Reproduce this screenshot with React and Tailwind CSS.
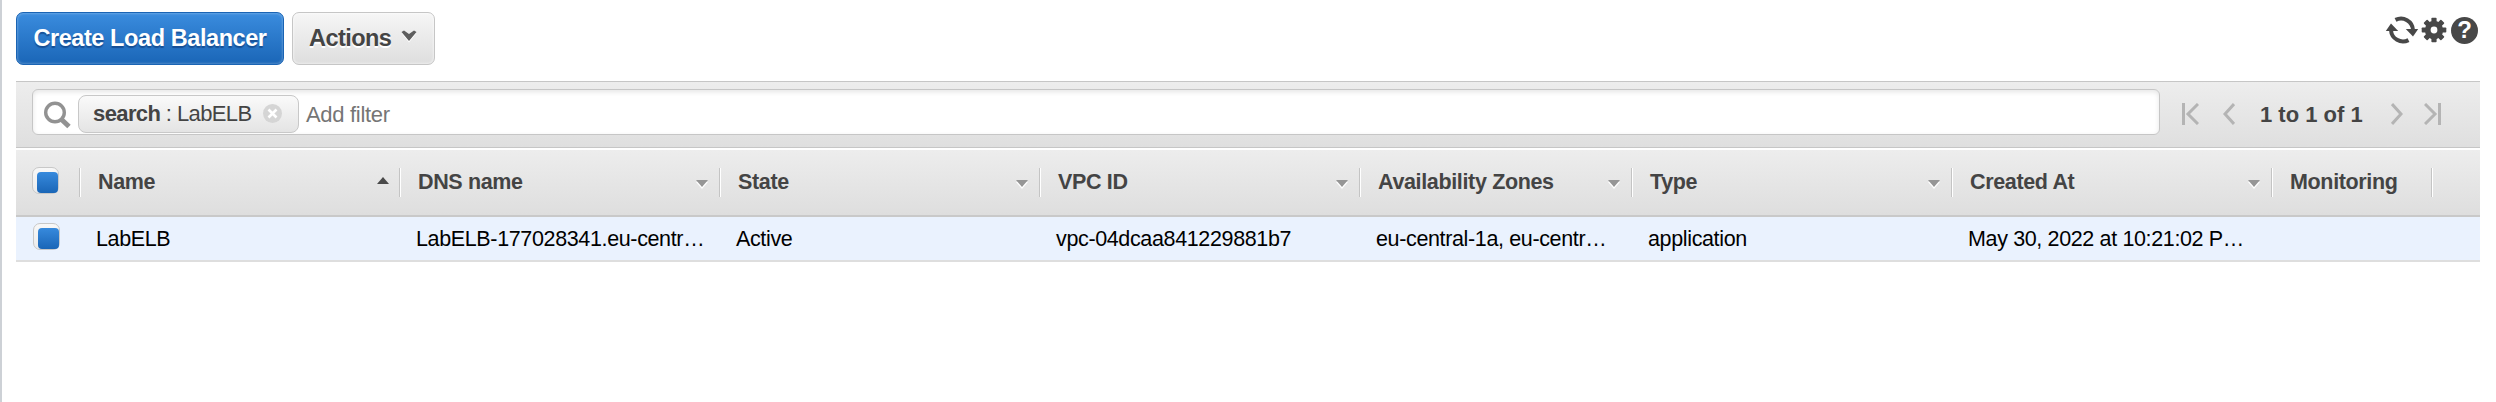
const columns = [
  { label: "Name", value: "LabELB", width: "w-[320px]", sort: "asc" },
  { label: "DNS name", value: "LabELB-177028341.eu-centr…", width: "w-[320px]", sort: "none" },
  { label: "State", value: "Active", width: "w-[320px]", sort: "none" },
  { label: "VPC ID", value: "vpc-04dcaa841229881b7", width: "w-[320px]", sort: "none" },
  { label: "Availability Zones", value: "eu-central-1a, eu-centr…", width: "w-[272px]", sort: "none" },
  { label: "Type", value: "application", width: "w-[320px]", sort: "none" },
  { label: "Created At", value: "May 30, 2022 at 10:21:02 P…", width: "w-[320px]", sort: "none" },
  { label: "Monitoring", value: "", width: "w-[160px]", sort: null },
];

function Separator() {
  return <span className="h-[29px] w-[2px] shrink-0 border-l border-r border-l-[#c4c4c4] border-r-white" />;
}

function SortMark({ sort }) {
  if (sort === "asc") {
    return (
      <svg width="12" height="7" viewBox="0 0 12 7" className="mr-[10px] mb-[4px]">
        <path d="M0 7L6 0L12 7Z" fill="#4a4a4a" />
      </svg>
    );
  }
  return (
    <svg width="12" height="9" viewBox="0 0 12 9" className="mr-[11px] mt-[3px]">
      <path d="M0 2L6 9L12 2Z" fill="#fff" />
      <path d="M0 0L6 7L12 0Z" fill="#969696" />
    </svg>
  );
}

function Checkbox() {
  return (
    <span className="flex h-[27px] w-[27px] items-end justify-end rounded-[7px] border border-[#c8c8c8] bg-gradient-to-b from-[#f8f8f8] to-[#ebebeb]">
      <span className="h-[21px] w-[21px] rounded-[4px] bg-gradient-to-b from-[#378add] to-[#1a66b7]" />
    </span>
  );
}

function PagerIcon({ d, bar, width, className }) {
  return (
    <svg width={width} height="22" viewBox={`0 0 ${width} 22`} fill="none" stroke="#b4b4b4" strokeWidth="3" className={className}>
      <path d={d} />
      {bar !== undefined && <path d={`M${bar} 0V22`} />}
    </svg>
  );
}

function GearIcon() {
  return (
    <svg width="26" height="26" viewBox="-13 -13 26 26" fill="#484848">
      {[0, 45, 90, 135].map((a) => (
        <rect key={a} x="-2.6" y="-12.3" width="5.2" height="24.6" rx="0.8" transform={`rotate(${a})`} />
      ))}
      <circle r="9.2" />
      <circle r="3.4" fill="#fff" />
    </svg>
  );
}

function RefreshIcon() {
  return (
    <svg width="34" height="30" viewBox="0 0 34 30" fill="none" stroke="#484848" strokeWidth="4">
      <path d="M10.5 4.9A12 12 0 0 1 28 15" />
      <path d="M23.5 25.1A12 12 0 0 1 6 15" />
      <path d="M20.8 14H33.2L28 21.6Z" fill="#484848" stroke="none" />
      <path d="M0.8 16H13.2L6 8.4Z" fill="#484848" stroke="none" />
    </svg>
  );
}

function Toolbar() {
  return (
    <div className="flex h-[81px] items-start pt-3">
      <button className="flex h-[53px] w-[268px] items-center justify-center rounded-[7px] border border-[#1a64b4] bg-gradient-to-b from-[#3a8cde] to-[#1a66b7] pt-px text-[23.5px] font-bold tracking-[-0.42px] whitespace-nowrap text-white shadow-[inset_0_0_3px_rgba(255,255,255,0.45)] [text-shadow:0_2px_1px_rgba(10,50,110,0.55)]">
        Create Load Balancer
      </button>
      <button className="ml-2 flex h-[53px] w-[143px] items-center rounded-[7px] border border-[#c6c6c6] bg-gradient-to-b from-[#f6f6f6] to-[#dedede] pt-px pl-4 text-[23.5px] font-bold text-[#444] shadow-[inset_0_0_3px_rgba(255,255,255,0.9)] [text-shadow:0_2px_0_#fff]">
        <span className="w-[92px] text-left tracking-[-0.55px] whitespace-nowrap">Actions</span>
        <svg width="16" height="13" viewBox="0 0 16 13" className="-mt-[5px]">
          <path d="M0.5 3L3 1L8 5L13 1L15.5 3L8 12.5Z" fill="#fff" />
          <path d="M0.5 2L3 0.5L8 4L13 0.5L15.5 2L8 11Z" fill="#5e5e5e" />
        </svg>
      </button>
      <div className="mt-[3px] ml-auto flex items-center">
        <RefreshIcon />
        <span className="ml-[2px]"><GearIcon /></span>
        <span className="ml-[4px] flex h-[27px] w-[27px] items-center justify-center rounded-full bg-[#484848] text-[24px] leading-none font-bold text-white">
          ?
        </span>
        <span className="w-[2px]" />
      </div>
    </div>
  );
}

function FilterBar() {
  return (
    <div className="flex h-[67px] border-t border-b border-[#c6c6c6] bg-gradient-to-b from-[#ededed] to-[#dfdfdf] pt-[7px] pl-4">
      <div className="flex h-[46px] w-[2128px] items-center rounded-[6px] border border-[#c6c6c6] bg-white pl-[10px] shadow-[inset_0_2px_5px_rgba(0,0,0,0.1)]">
        <svg width="28" height="28" viewBox="0 0 28 28" fill="none" stroke="#929292" className="mt-[5px]">
          <circle cx="12" cy="11.5" r="9.3" strokeWidth="3.4" />
          <path d="M18.5 18.5L26 25.5" strokeWidth="5" />
        </svg>
        <div className="mt-[3px] ml-[7px] flex h-[38px] w-[221px] items-center rounded-[8px] border border-[#c8c8c8] bg-gradient-to-b from-[#fafafa] to-[#e4e4e4] pb-px pl-[14px] text-[22px] whitespace-nowrap text-[#444]">
          <span className="w-[170px] tracking-[-0.6px]">
            <b>search</b> : LabELB
          </span>
          <svg width="19" height="19" viewBox="0 0 19 19">
            <circle cx="9.5" cy="9.5" r="9.5" fill="#d5d5d5" />
            <path d="M5.5 5.5L13.5 13.5M13.5 5.5L5.5 13.5" stroke="#fff" strokeWidth="2.6" />
          </svg>
        </div>
        <span className="mt-[4px] ml-[7px] text-[22px] tracking-[-0.3px] text-[#757575]">Add filter</span>
      </div>
      <div className="mt-[14px] flex h-[22px] items-center">
        <PagerIcon width={17} bar={1.5} d="M16 1L6 11L16 21" className="ml-[22px]" />
        <PagerIcon width={12} d="M11 1L2 11L11 21" className="ml-[24px]" />
        <span className="ml-[25px] w-[106px] text-[22px] font-bold whitespace-nowrap text-[#444]">1 to 1 of 1</span>
        <PagerIcon width={12} d="M1 1L10 11L1 21" className="ml-[25px]" />
        <PagerIcon width={17} bar={15.5} d="M1 1L11 11L1 21" className="ml-[21px]" />
      </div>
    </div>
  );
}

function Table() {
  return (
    <div className="mt-[2px]">
      <div className="flex h-[67px] items-start border-b-2 border-[#c9c9c9] bg-gradient-to-b from-[#ededed] to-[#dedede]">
        <div className="flex h-[63px] w-[63px] shrink-0 items-center pb-[3px] pl-4">
          <Checkbox />
        </div>
        {columns.map((c) => (
          <div key={c.label} className={`flex h-[65px] shrink-0 items-center ${c.width}`}>
            <Separator />
            <span className="mb-px ml-[17px] flex-1 text-[21.5px] font-bold tracking-[-0.35px] whitespace-nowrap text-[#444]">{c.label}</span>
            {c.sort && <SortMark sort={c.sort} />}
          </div>
        ))}
        <div className="flex h-[65px] items-center">
          <Separator />
        </div>
      </div>
      <div className="flex h-[45px] items-start border-b-2 border-[#dedede] bg-[#eaf2fe]">
        <div className="flex h-[39px] w-[64px] shrink-0 items-center pl-[17px]">
          <Checkbox />
        </div>
        {columns.map((c) => (
          <div key={c.label} className={`flex h-[43px] shrink-0 items-center pt-[2px] pl-4 ${c.width}`}>
            <span className="text-[21.5px] tracking-[-0.36px] whitespace-nowrap text-black">{c.value}</span>
          </div>
        ))}
      </div>
    </div>
  );
}

export default function App() {
  return (
    <div className="h-[402px] w-[2496px] overflow-hidden border-l-2 border-[#cdd1d6] bg-white pr-4 pl-[14px] font-['Liberation_Sans',Arial,sans-serif]">
      <Toolbar />
      <FilterBar />
      <Table />
    </div>
  );
}
